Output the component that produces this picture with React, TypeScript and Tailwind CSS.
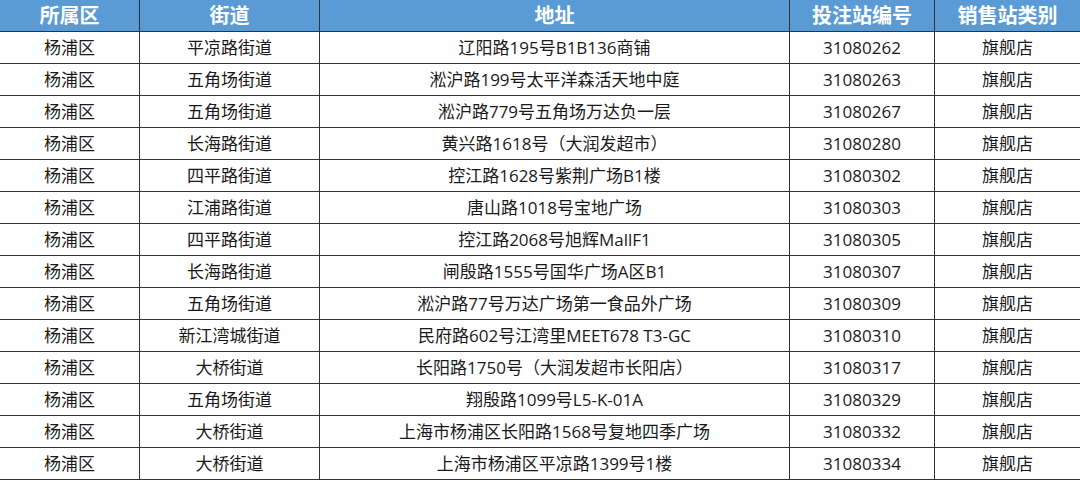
import React from "react";

const rows: [string, string, string, string, string][] = [
  ["杨浦区", "平凉路街道", "辽阳路195号B1B136商铺", "31080262", "旗舰店"],
  ["杨浦区", "五角场街道", "淞沪路199号太平洋森活天地中庭", "31080263", "旗舰店"],
  ["杨浦区", "五角场街道", "淞沪路779号五角场万达负一层", "31080267", "旗舰店"],
  ["杨浦区", "长海路街道", "黄兴路1618号（大润发超市）", "31080280", "旗舰店"],
  ["杨浦区", "四平路街道", "控江路1628号紫荆广场B1楼", "31080302", "旗舰店"],
  ["杨浦区", "江浦路街道", "唐山路1018号宝地广场", "31080303", "旗舰店"],
  ["杨浦区", "四平路街道", "控江路2068号旭辉MallF1", "31080305", "旗舰店"],
  ["杨浦区", "长海路街道", "闸殷路1555号国华广场A区B1", "31080307", "旗舰店"],
  ["杨浦区", "五角场街道", "淞沪路77号万达广场第一食品外广场", "31080309", "旗舰店"],
  ["杨浦区", "新江湾城街道", "民府路602号江湾里MEET678 T3-GC", "31080310", "旗舰店"],
  ["杨浦区", "大桥街道", "长阳路1750号（大润发超市长阳店）", "31080317", "旗舰店"],
  ["杨浦区", "五角场街道", "翔殷路1099号L5-K-01A", "31080329", "旗舰店"],
  ["杨浦区", "大桥街道", "上海市杨浦区长阳路1568号复地四季广场", "31080332", "旗舰店"],
  ["杨浦区", "大桥街道", "上海市杨浦区平凉路1399号1楼", "31080334", "旗舰店"],
];

const headers = ["所属区", "街道", "地址", "投注站编号", "销售站类别"];
const widths = ["w-[140px]", "w-[180px]", "w-[470px]", "w-[145px]", "w-[145px]"];

export default function App() {
  return (
    <div
      className="w-[1080px] h-[480px] bg-white overflow-hidden"
      style={{ fontFamily: '"Open Sans", "Noto Sans CJK SC", sans-serif' }}
    >
      <div className="flex h-[32px] bg-[#5b9bd5] border-b border-[#333333]">
        {headers.map((h, i) => (
          <div
            key={h}
            className={`${widths[i]} shrink-0 flex items-center justify-center text-white font-bold text-[20px] leading-none ${
              i < 4 ? "border-r border-[#333333]" : ""
            }`}
          >
            {h}
          </div>
        ))}
      </div>
      {rows.map((r, ri) => (
        <div key={ri} className="flex h-[32px] border-b border-[#333333]">
          {r.map((c, i) => (
            <div
              key={i}
              className={`${widths[i]} shrink-0 flex items-center justify-center text-[#1a1a1a] text-[17px] leading-none ${
                i < 4 ? "border-r border-[#333333]" : ""
              }`}
            >
              {c}
            </div>
          ))}
        </div>
      ))}
    </div>
  );
}
